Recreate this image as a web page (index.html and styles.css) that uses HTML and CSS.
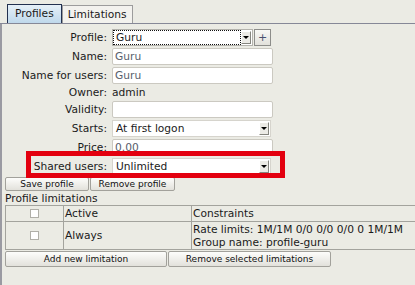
FILE: index.html
```html
<!DOCTYPE html>
<html lang="en">
<head>
    <meta charset="UTF-8">
    <title>Profiles</title>
    <link rel="stylesheet" href="styles.css">
</head>
<body>
    <div class="tabs">
        <div class="tab active">Profiles</div>
        <div class="tab">Limitations</div>
    </div>

    <div class="panel">
        <div class="form">
            <label>Profile:</label>
            <div class="field-row">
                <div class="select focus"><span>Guru</span><i class="drop"></i></div>
                <button class="add">+</button>
            </div>

            <label>Name:</label>
            <input class="text dim" value="Guru">

            <label>Name for users:</label>
            <input class="text dim" value="Guru">

            <label>Owner:</label>
            <span class="value">admin</span>

            <label>Validity:</label>
            <input class="text" value="">

            <label>Starts:</label>
            <div class="select"><span>At first logon</span><i class="drop"></i></div>

            <label>Price:</label>
            <input class="text dim" value="0.00">

            <label>Shared users:</label>
            <div class="select"><span>Unlimited</span><i class="drop"></i></div>
        </div>

        <div class="actions">
            <button class="btn save">Save profile</button>
            <button class="btn remove">Remove profile</button>
        </div>

        <div class="section-title">Profile limitations</div>

        <table class="limits">
            <tr class="head">
                <td class="check-cell"><span class="check"></span></td>
                <td>Active</td>
                <td>Constraints</td>
            </tr>
            <tr class="row">
                <td class="check-cell"><span class="check"></span></td>
                <td>Always</td>
                <td>Rate limits: 1M/1M 0/0 0/0 0/0 0 1M/1M<br>Group name: profile-guru</td>
            </tr>
        </table>

        <div class="actions bottom">
            <button class="btn add-limit">Add new limitation</button>
            <button class="btn remove-limit">Remove selected limitations</button>
        </div>
    </div>

    <!-- annotation box -->
    <div class="highlight"></div>
</body>
</html>
```

FILE: styles.css
```css
* {
    box-sizing: border-box;
}

body {
    margin: 0;
    width: 415px;
    height: 285px;
    overflow: hidden;
    position: relative;
    background: #ebebe4;
    font-family: "DejaVu Sans", Verdana, sans-serif;
    font-size: 10.67px;
    color: #1a1a1a;
}

/* tabs */

.tabs {
    display: flex;
    align-items: flex-end;
    height: 24px;
    padding-left: 7px;
    border-bottom: 1px solid #868897;
}

.tab {
    height: 18px;
    line-height: 17px;
    padding: 0 5px;
    background: #f3f2ee;
    border: 1px solid #9c9c9c;
    border-bottom: none;
}

.tab.active {
    height: 19px;
    padding: 0 7px;
    background: linear-gradient(#e6f0f8, #bfd8eb);
    border-color: #22304f;
}

/* panel */

.panel {
    height: 261px;
    border-left: 2px solid #9a9aa2;
    overflow: hidden;
}

.form {
    display: grid;
    grid-template-columns: 105px 161px;
    column-gap: 5px;
    row-gap: 2px;
    align-items: center;
    padding-top: 5px;
}

.form label {
    text-align: right;
}

.value {
    line-height: 13px;
}

.text {
    width: 161px;
    height: 17px;
    margin: 0;
    padding: 0 2px;
    border: 1px solid #cbc9c1;
    border-radius: 2px;
    background: #fff;
    font: inherit;
    color: #1a1a1a;
}

.text.dim {
    color: #575e6c;
}

.field-row {
    display: flex;
    gap: 1px;
}

.select {
    display: flex;
    align-items: center;
    width: 159px;
    height: 17px;
    padding-right: 1px;
    background: #fff;
    border: 1px solid #d6d4cd;
}

.select span {
    flex: 1;
    padding-left: 3px;
}

.select.focus {
    width: 141px;
    border-color: #b4b3ad;
}

.select.focus span {
    align-self: stretch;
    line-height: 13px;
    border: 1px dotted #111;
    padding-left: 2px;
}

.drop {
    display: flex;
    align-items: center;
    justify-content: center;
    width: 10px;
    height: 13px;
    background: #ecebe6;
    border: 1px solid;
    border-color: #fff #86867f #86867f #fff;
}

.drop::after {
    content: "";
    border-left: 3px solid transparent;
    border-right: 3px solid transparent;
    border-top: 3px solid #000;
}

.add {
    width: 17px;
    height: 17px;
    padding: 0;
    border: 1px solid #8d8d8a;
    background: linear-gradient(#f8f8f5, #e2e1db);
    font-family: inherit;
    font-size: 11px;
    line-height: 13px;
    color: #4a5070;
}

/* buttons */

.actions {
    display: flex;
    gap: 1px;
    padding-left: 3px;
    margin-top: 2px;
}

.btn {
    height: 14px;
    padding: 0;
    border: 1px solid #a2a19b;
    border-radius: 2px;
    background: linear-gradient(#fdfdfb, #e2e1db);
    font-family: inherit;
    font-size: 9px;
    line-height: 12px;
    color: #111;
}

.save { width: 84px; }
.remove { width: 85px; }

.actions.bottom {
    margin-top: 1px;
}

.actions.bottom .btn {
    height: 16px;
}

.add-limit { width: 162px; }
.remove-limit { width: 163px; }

/* limitations table */

.section-title {
    padding-left: 3px;
    margin-top: 1px;
    line-height: 13px;
}

.limits {
    width: 430px;
    margin-left: 3px;
    border-collapse: collapse;
}

.limits td {
    padding: 0 1px;
    border: 1px solid #a3a39d;
    vertical-align: middle;
    line-height: 13px;
}

.limits td:nth-child(1) { width: 58px; }
.limits td:nth-child(2) { width: 128px; }

.head td {
    height: 16px;
}

.row td {
    height: 28px;
}

.check-cell {
    text-align: center;
}

.check {
    display: inline-block;
    width: 9px;
    height: 9px;
    margin-top: 2px;
    background: #fff;
    border: 1px solid #b0afa8;
}

/* red annotation */

.highlight {
    position: absolute;
    left: 26px;
    top: 151px;
    width: 259px;
    height: 27px;
    border: 5px solid #e3000f;
}
```
